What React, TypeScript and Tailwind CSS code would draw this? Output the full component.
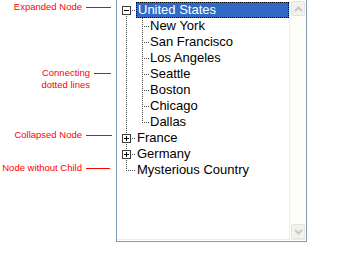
import React from "react";

type RootKind = "expanded" | "collapsed" | "pass" | "lastLeaf";
type ChildKind = "mid" | "last";

function Dot({ x, y }: { x: number; y: number }) {
  return <rect x={x} y={y} width={1} height={1} fill="#4a4a4a" />;
}

function vDots(x: number, y0: number, y1: number) {
  const out: React.ReactNode[] = [];
  for (let y = y0; y <= y1; y += 2) out.push(<Dot key={`v${x}-${y}`} x={x} y={y} />);
  return out;
}
function hDots(y: number, x0: number, x1: number) {
  const out: React.ReactNode[] = [];
  for (let x = x0; x <= x1; x += 2) out.push(<Dot key={`h${y}-${x}`} x={x} y={y} />);
  return out;
}

function ToggleBox({ plus }: { plus: boolean }) {
  return (
    <g>
      <rect x={5.5} y={4.5} width={8} height={8} fill="#fff" stroke="#3c3c3c" strokeWidth={1} />
      <rect x={7} y={8} width={5} height={1} fill="#000" />
      {plus && <rect x={9} y={6} width={1} height={5} fill="#000" />}
    </g>
  );
}

function RootGutter({ kind }: { kind: RootKind }) {
  return (
    <svg width={19} height={16} className="shrink-0 block" shapeRendering="crispEdges">
      {kind === "expanded" && (
        <>
          <ToggleBox plus={false} />
          {vDots(9, 14, 15)}
          {hDots(8, 15, 18)}
        </>
      )}
      {kind === "collapsed" && (
        <>
          {vDots(9, 0, 3)}
          <ToggleBox plus />
          {vDots(9, 14, 15)}
          {hDots(8, 15, 18)}
        </>
      )}
      {kind === "pass" && vDots(9, 0, 15)}
      {kind === "lastLeaf" && (
        <>
          {vDots(9, 0, 8)}
          {hDots(8, 11, 18)}
        </>
      )}
    </svg>
  );
}

function ChildGutter({ kind }: { kind: ChildKind }) {
  return (
    <svg width={13} height={16} className="shrink-0 block" shapeRendering="crispEdges">
      {kind === "mid" ? vDots(6, 0, 15) : vDots(6, 0, 8)}
      {hDots(8, 8, 12)}
    </svg>
  );
}

function Label({ text, selected }: { text: string; selected?: boolean }) {
  if (selected) {
    return (
      <span className="flex-1 h-[16px] leading-[14px] pl-[1px] bg-[#316ac5] text-white border border-dotted border-black whitespace-nowrap">
        {text}
      </span>
    );
  }
  return <span className="h-[16px] leading-[16px] px-[1px] text-black whitespace-nowrap">{text}</span>;
}

const cities = ["New York", "San Francisco", "Los Angeles", "Seattle", "Boston", "Chicago", "Dallas"];

function Chevron({ up }: { up: boolean }) {
  return (
    <svg width={9} height={6} viewBox="0 0 9 6" className="block">
      <path
        d={up ? "M1 5 L4.5 1.5 L8 5" : "M1 1 L4.5 4.5 L8 1"}
        fill="none"
        stroke="#c9c8c0"
        strokeWidth={2}
      />
    </svg>
  );
}

function ScrollButton({ up }: { up: boolean }) {
  return (
    <div className="w-[14px] h-[15px] rounded-[2px] border border-[#e6e5dd] bg-[#f3f2ec] flex items-center justify-center">
      <Chevron up={up} />
    </div>
  );
}

function Callout({
  text,
  lineW,
  pr,
  className = "",
}: {
  text: string;
  lineW: string;
  pr: string;
  className?: string;
}) {
  return (
    <div className={`flex items-center justify-end gap-[4px] h-[12px] ${pr} ${className}`}>
      <span className="leading-[12px] whitespace-nowrap">{text}</span>
      <div className={`h-px bg-[#ff0000] ${lineW}`} />
    </div>
  );
}

export default function App() {
  return (
    <div className="w-[361px] h-[255px] bg-white flex font-['Liberation_Sans',Arial,sans-serif] overflow-hidden">
      {/* Callout labels */}
      <div className="w-[116px] shrink-0 flex flex-col text-[9.5px] text-[#ff0000] pt-[1px]">
        <Callout text="Expanded Node" lineW="w-[25px]" pr="pr-[5px]" />
        <Callout text="Connecting" lineW="w-[17px]" pr="pr-[5px]" className="mt-[54px]" />
        <div className="h-[11px] leading-[11px] text-right pr-[26px] whitespace-nowrap">dotted lines</div>
        <Callout text="Collapsed Node" lineW="w-[26px]" pr="pr-[4px]" className="mt-[39px]" />
        <Callout text="Node without Child" lineW="w-[24px]" pr="pr-[6px]" className="mt-[21px]" />
      </div>

      {/* Tree view */}
      <div className="w-[191px] h-[242px] shrink-0 border-l border-r border-b border-[#7f9db9]">
        <div className="h-[240px] flex border-b border-[#ecebe3]">
          <div className="flex-1 pt-[2px] text-[13px] flex flex-col">
            <div className="flex h-[16px]">
              <RootGutter kind="expanded" />
              <Label text="United States" selected />
            </div>
            {cities.map((c, i) => (
              <div key={c} className="flex h-[16px]">
                <RootGutter kind="pass" />
                <ChildGutter kind={i === cities.length - 1 ? "last" : "mid"} />
                <Label text={c} />
              </div>
            ))}
            <div className="flex h-[16px]">
              <RootGutter kind="collapsed" />
              <Label text="France" />
            </div>
            <div className="flex h-[16px]">
              <RootGutter kind="collapsed" />
              <Label text="Germany" />
            </div>
            <div className="flex h-[16px]">
              <RootGutter kind="lastLeaf" />
              <Label text="Mysterious Country" />
            </div>
          </div>
          <div className="w-[17px] shrink-0 h-[239px] bg-[#fdfdfa] border-l border-[#efeee7] pl-[1px] pt-[1px] flex flex-col justify-between">
            <ScrollButton up />
            <ScrollButton up={false} />
          </div>
        </div>
      </div>
    </div>
  );
}
